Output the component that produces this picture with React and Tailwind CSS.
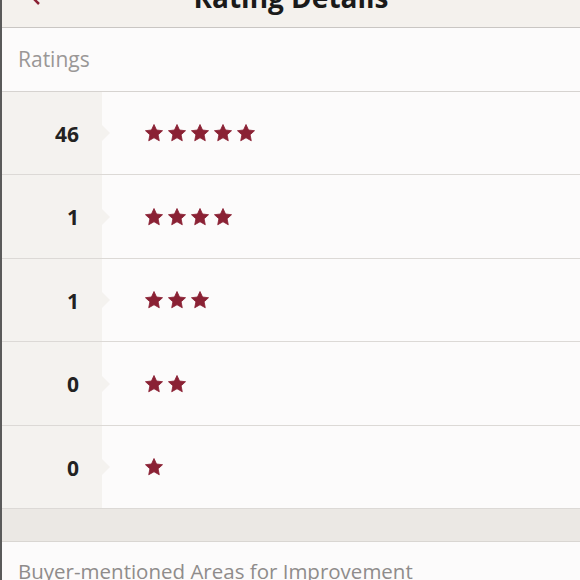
import React from "react";

const rows = [
  { count: 46, stars: 5, h: "h-[83px]" },
  { count: 1, stars: 4, h: "h-[84px]" },
  { count: 1, stars: 3, h: "h-[83px]" },
  { count: 0, stars: 2, h: "h-[84px]" },
  { count: 0, stars: 1, h: "h-[83px]" },
];

const Star = () => (
  <svg width="20" height="20" viewBox="0 0 24 24" className="shrink-0">
    <path
      d="M12 1.8l3.05 6.6 7.2.85-5.33 4.93 1.42 7.12L12 17.7l-6.34 3.6 1.42-7.12L1.75 9.25l7.2-.85z"
      fill="#8a2134"
      stroke="#8a2134"
      strokeWidth="1"
      strokeLinejoin="round"
    />
  </svg>
);

const RatingRow = ({ count, stars, h }) => (
  <div className={`flex ${h} border-b border-[#dcd9d6]`}>
    <div className="relative w-[100px] shrink-0 bg-[#f4f2ef] flex items-center justify-end pr-[23px]">
      <span className="text-[21px] font-bold text-[#222] pt-[3px]">{count}</span>
      <span className="absolute right-[-8px] top-1/2 -translate-y-1/2 w-0 h-0 border-y-[8px] border-y-transparent border-l-[8px] border-l-[#f4f2ef]" />
    </div>
    <div className="flex-1 flex items-center gap-[3px] pl-[42px] bg-[#fcfbfb]">
      {Array.from({ length: stars }).map((_, i) => (
        <Star key={i} />
      ))}
    </div>
  </div>
);

export default function App() {
  return (
    <div
      className="w-[580px] h-[580px] overflow-hidden bg-[#fcfbfb] border-l-2 border-[#5a5a5a]"
      style={{ fontFamily: "'Open Sans', Lato, sans-serif" }}
    >
      <div className="relative h-[28px] overflow-hidden bg-[#f4f1ed] border-b border-[#c9c6c3]">
        <svg
          width="14"
          height="20"
          viewBox="0 0 14 20"
          className="absolute left-[26px] top-[-14px]"
        >
          <path d="M11 2L3 10l8 8" fill="none" stroke="#8a2134" strokeWidth="2.5" />
        </svg>
        <div className="-mt-[18px] text-center text-[28px] leading-[30px] font-bold text-[#1a1a1a]">
          Rating Details
        </div>
      </div>

      <div className="h-[64px] flex items-center pl-[16px] border-b border-[#d6d3d0] bg-[#fcfbfb]">
        <span className="text-[21px] text-[#9a9796]">Ratings</span>
      </div>

      {rows.map((r, i) => (
        <RatingRow key={i} {...r} />
      ))}

      <div className="h-[33px] bg-[#ebe8e4] border-b border-[#d9d6d2]" />

      <div className="pt-[14px] pl-[16px]">
        <span className="text-[20.5px] text-[#8f8c8b]">
          Buyer-mentioned Areas for Improvement
        </span>
      </div>
    </div>
  );
}
